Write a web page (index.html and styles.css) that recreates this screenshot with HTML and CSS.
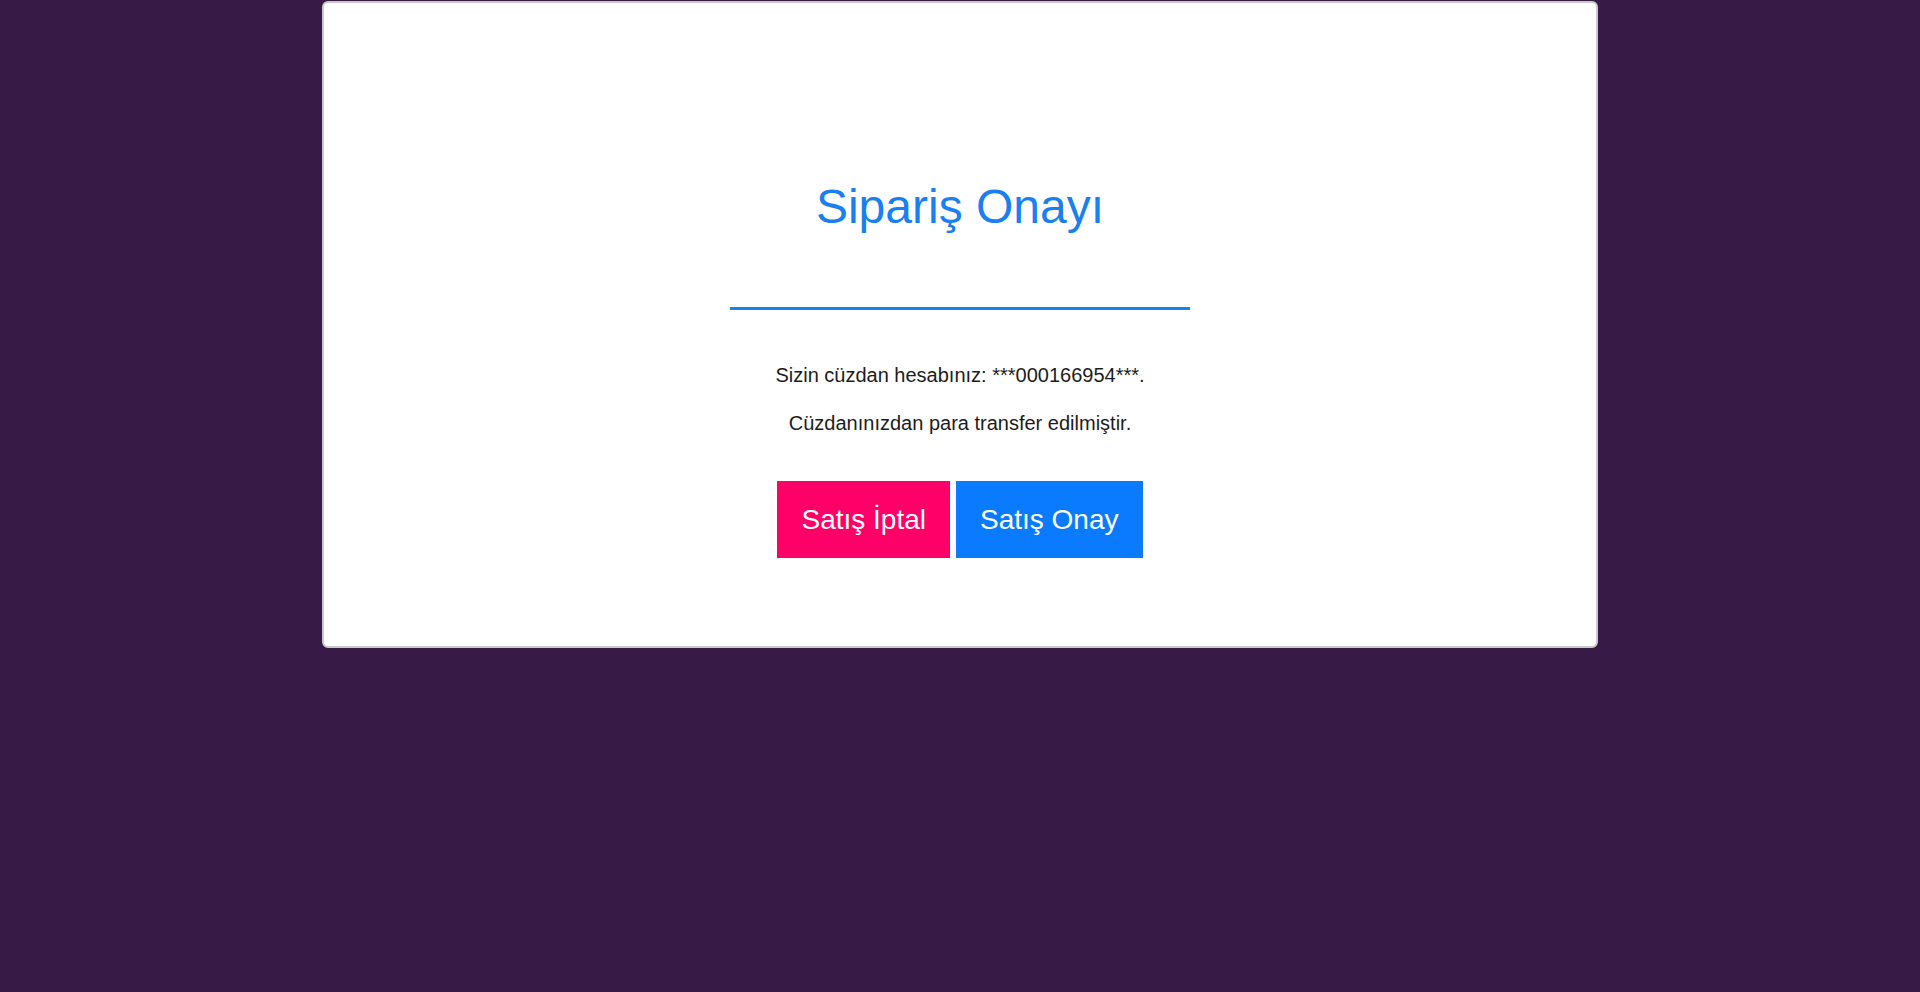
FILE: index.html
```html
<!DOCTYPE html>
<html lang="tr">
<head>
<meta charset="utf-8">
<title>Sipariş Onayı</title>
<link rel="stylesheet" href="styles.css">
</head>
<body>
<div class="page">
  <div class="card">
    <h1 class="title">Sipariş Onayı</h1>
    <div class="rule"></div>
    <p class="info">Sizin cüzdan hesabınız: ***000166954***.</p>
    <p class="info">Cüzdanınızdan para transfer edilmiştir.</p>
    <div class="actions">
      <button class="btn btn-cancel">Satış İptal</button>
      <button class="btn btn-confirm">Satış Onay</button>
    </div>
  </div>
</div>
</body>
</html>
```

FILE: styles.css
```css
html, body {
  margin: 0;
  padding: 0;
  height: 100%;
}
body {
  background: #371a45;
  font-family: "Liberation Sans", Arial, sans-serif;
  overflow: hidden;
}
.page {
  display: flex;
  justify-content: center;
  padding-top: 1px;
}
.card {
  box-sizing: border-box;
  width: 1276px;
  height: 647px;
  background: #fff;
  border: 2px solid #c8c8c8;
  border-radius: 6px;
  display: flex;
  flex-direction: column;
  align-items: center;
  padding-top: 176px;
}
.title {
  margin: 0;
  font-size: 48px;
  font-weight: normal;
  line-height: 55px;
  color: #1a7ff0;
}
.rule {
  width: 460px;
  height: 3px;
  background: #1a7ff0;
  margin-top: 73px;
}
.info {
  margin: 0;
  font-size: 20px;
  line-height: 23px;
  color: #1c1c1c;
}
.rule + .info {
  margin-top: 54px;
}
.info + .info {
  margin-top: 25px;
}
.actions {
  display: flex;
  gap: 6px;
  margin-top: 46px;
}
.btn {
  border: none;
  border-radius: 0;
  font-family: "Liberation Sans", Arial, sans-serif;
  font-size: 28px;
  color: #fff;
  height: 77px;
  padding: 0 24px;
  cursor: pointer;
}
.btn-cancel {
  background: #ff0068;
}
.btn-confirm {
  background: #0a7bff;
}
```
